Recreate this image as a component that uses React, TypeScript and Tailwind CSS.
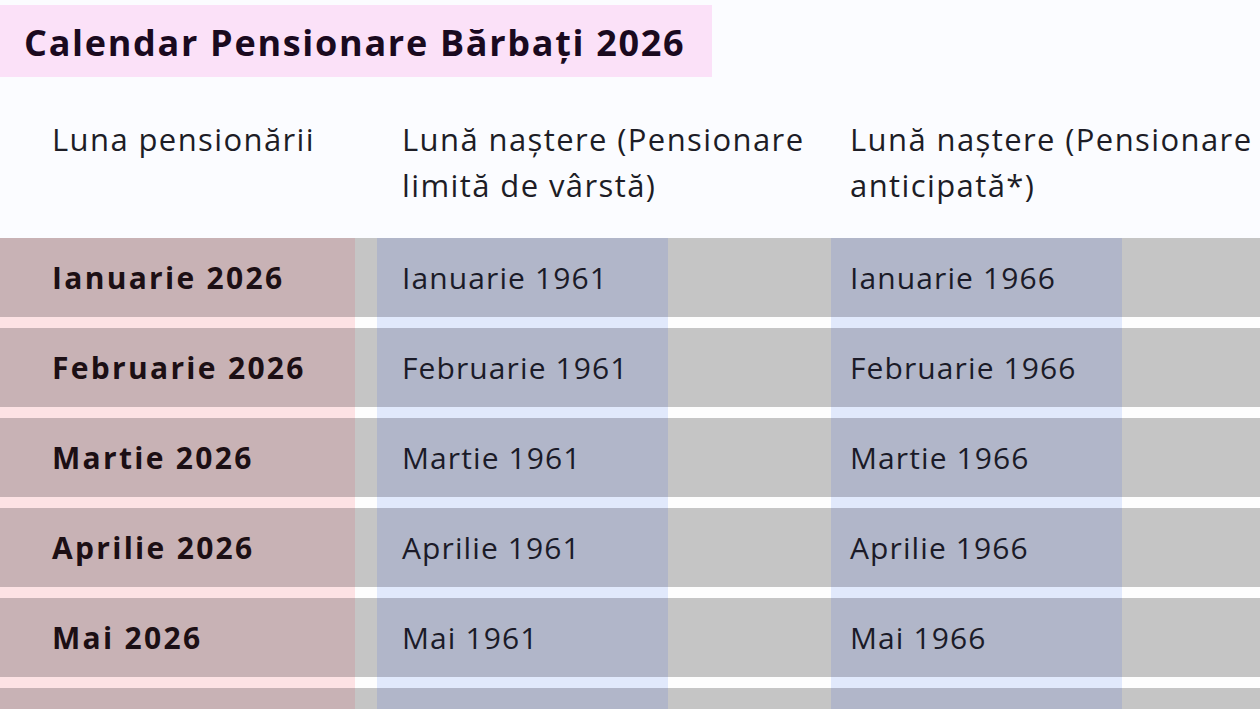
const randuri = [
  { luna: "Ianuarie 2026", limita: "Ianuarie 1961", anticipata: "Ianuarie 1966" },
  { luna: "Februarie 2026", limita: "Februarie 1961", anticipata: "Februarie 1966" },
  { luna: "Martie 2026", limita: "Martie 1961", anticipata: "Martie 1966" },
  { luna: "Aprilie 2026", limita: "Aprilie 1961", anticipata: "Aprilie 1966" },
  { luna: "Mai 2026", limita: "Mai 1961", anticipata: "Mai 1966" },
]

const coloane = "grid grid-cols-[355px_22px_291px_163px_291px_1fr]"

// Benzile colorate ale coloanelor peste fondul gri al rândului.
function Benzi({ inalt, roz, gri, albastru }: { inalt: string; roz: string; gri: string; albastru: string }) {
  return (
    <div className={`${coloane} ${inalt}`}>
      <div className={roz} />
      <div className={gri} />
      <div className={albastru} />
      <div className={gri} />
      <div className={albastru} />
      <div className={gri} />
    </div>
  )
}

function Separator() {
  return <Benzi inalt="h-[11px]" roz="bg-[#fde2e4]" gri="bg-[#fdfdfd]" albastru="bg-[#e1e9fc]" />
}

function Rand({ luna, limita, anticipata }: { luna: string; limita: string; anticipata: string }) {
  return (
    <>
      <div className={`${coloane} h-[79px] text-[30px] tracking-[1.1px] text-[#1b1b28]`}>
        <div className="flex items-center bg-[#c8b2b5] pl-[52px] font-bold tracking-[2.3px] text-[#1c0f14]">{luna}</div>
        <div className="bg-[#c5c5c5]" />
        <div className="flex items-center bg-[#b1b6c9] pl-[25px]">{limita}</div>
        <div className="bg-[#c5c5c5]" />
        <div className="flex items-center bg-[#b1b6c9] pl-[19px]">{anticipata}</div>
        <div className="bg-[#c5c5c5]" />
      </div>
      <Separator />
    </>
  )
}

export default function App() {
  return (
    <div
      className="h-[709px] w-[1260px] overflow-hidden bg-[#fbfcff]"
      style={{ fontFamily: "'Open Sans', sans-serif" }}
    >
      <div className="pt-[5px]">
        <div className="flex h-[72px] w-[712px] items-center bg-[#fbe1f8] pl-[24px] pt-[3px] text-[36px] font-bold tracking-[1.7px] text-[#1a0a1f]">
          Calendar Pensionare Bărbați 2026
        </div>
      </div>

      <div className={`${coloane} h-[161px] pt-[39px] text-[31px] leading-[46px] tracking-[1.4px] text-[#1d1d26]`}>
        <div className="pl-[52px]">Luna pensionării</div>
        <div />
        <div className="col-span-2 whitespace-nowrap pl-[25px]">
          Lună naștere (Pensionare
          <br />
          limită de vârstă)
        </div>
        <div className="col-span-2 whitespace-nowrap pl-[19px]">
          Lună naștere (Pensionare
          <br />
          anticipată*)
        </div>
      </div>

      {randuri.map((r) => (
        <Rand key={r.luna} {...r} />
      ))}
      {/* rândul următor, tăiat de marginea de jos */}
      <Benzi inalt="h-[79px]" roz="bg-[#c8b2b5]" gri="bg-[#c5c5c5]" albastru="bg-[#b1b6c9]" />
    </div>
  )
}
